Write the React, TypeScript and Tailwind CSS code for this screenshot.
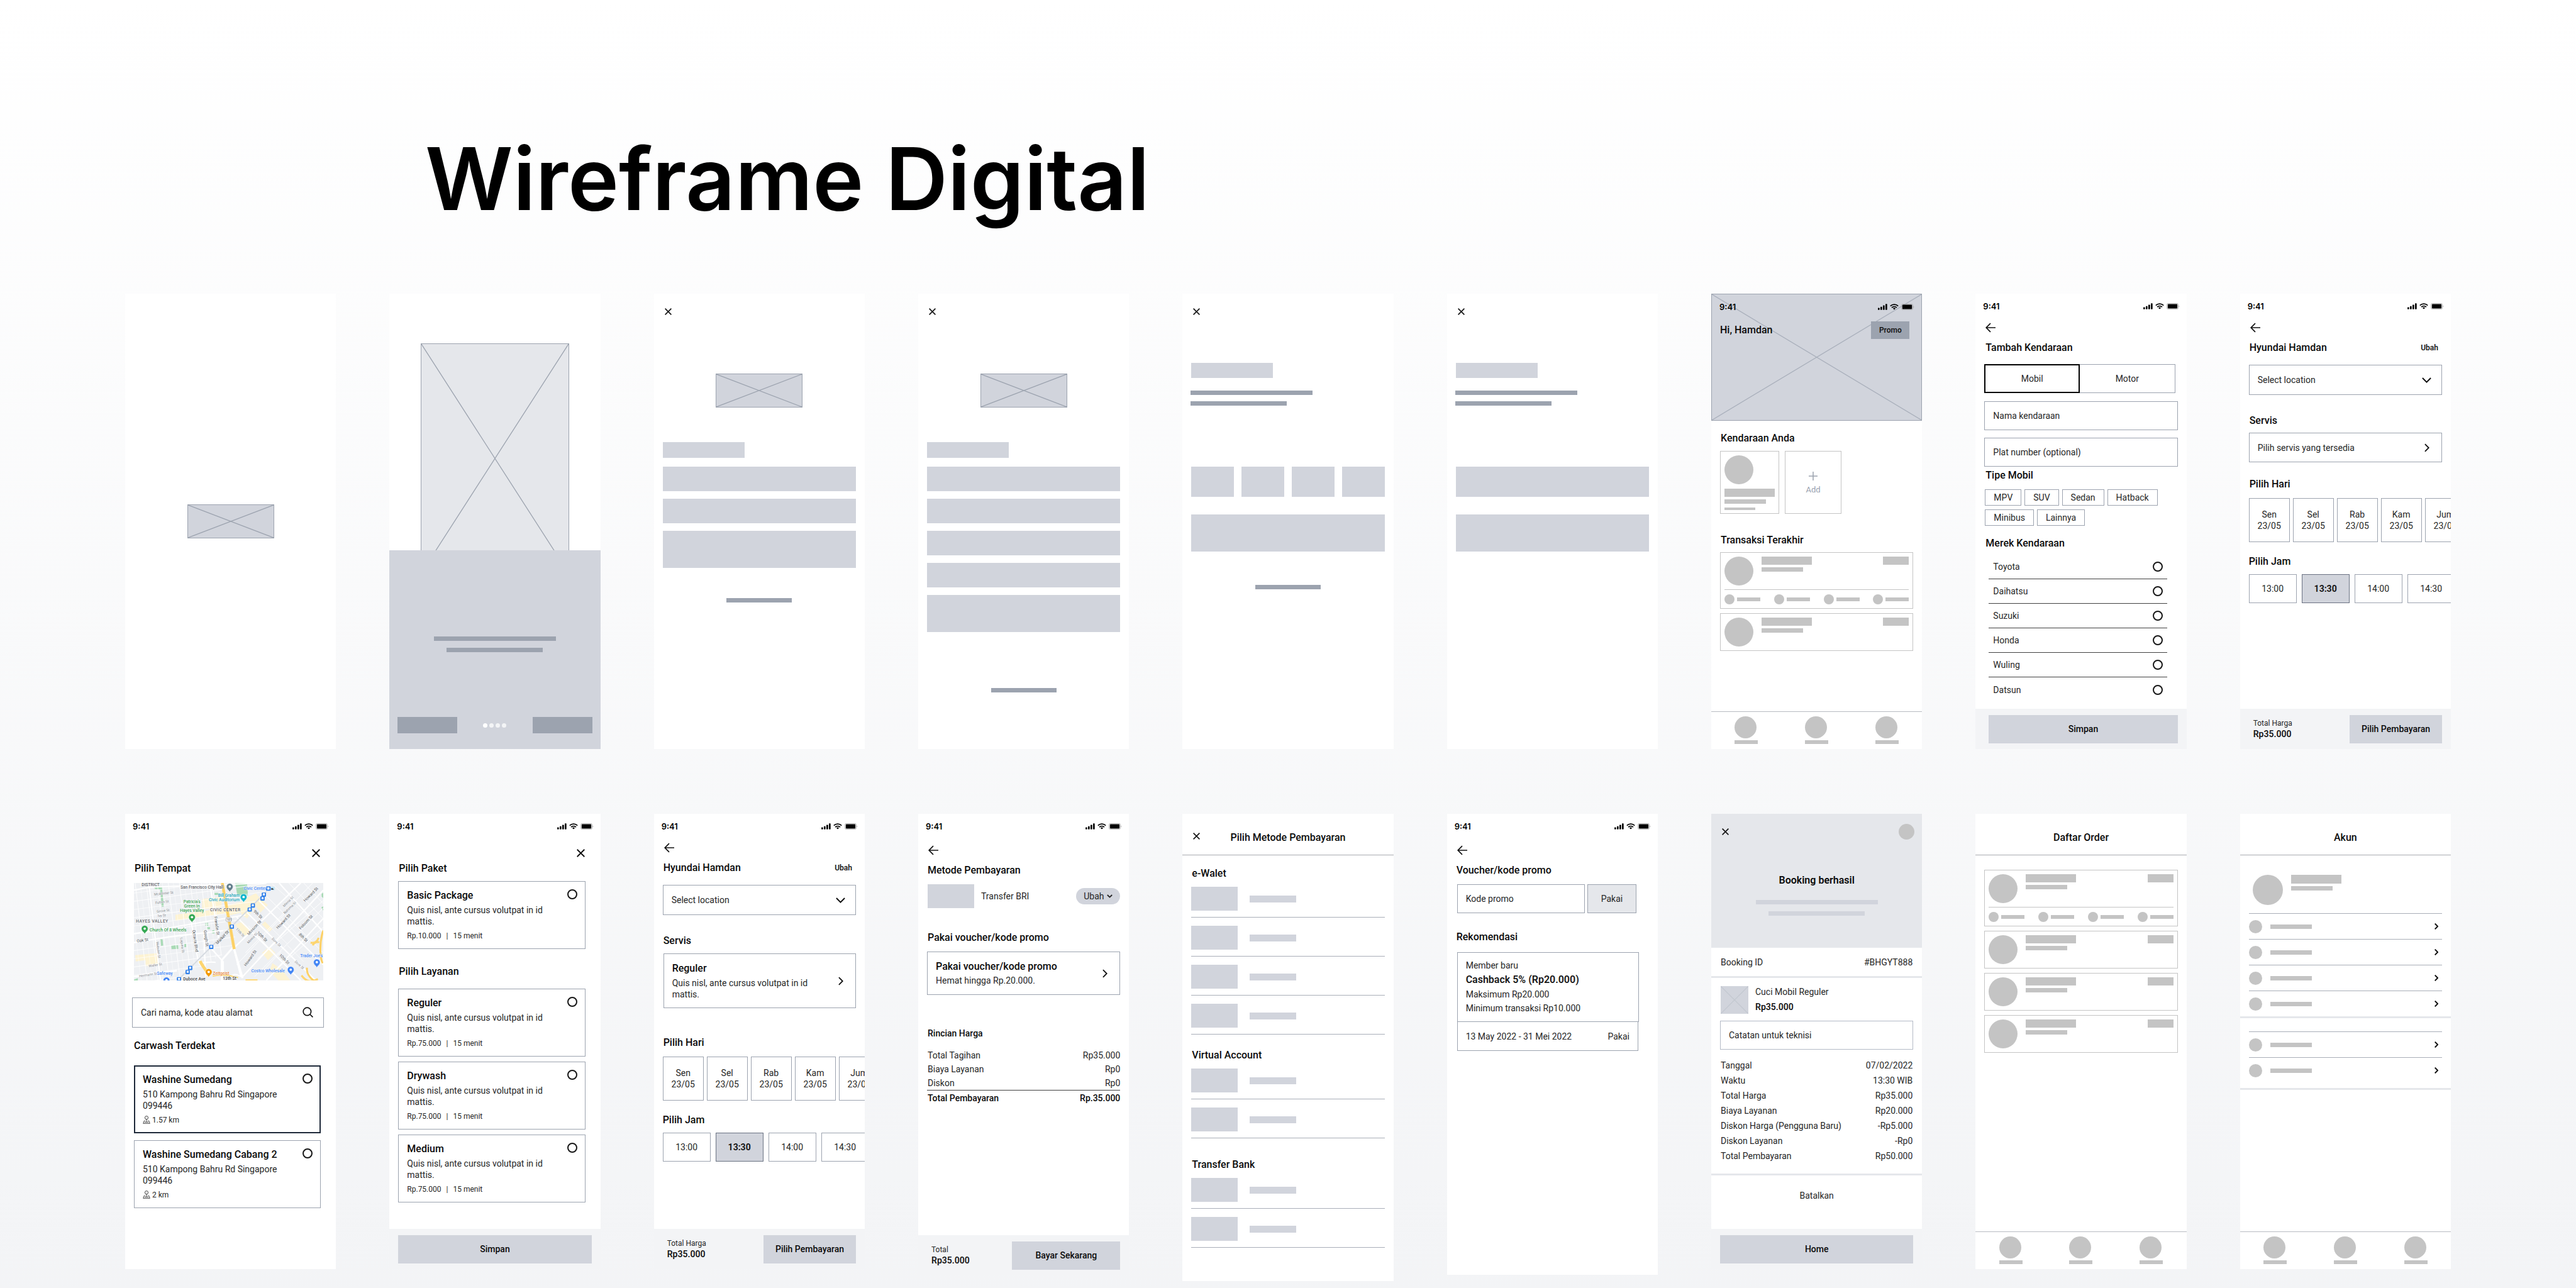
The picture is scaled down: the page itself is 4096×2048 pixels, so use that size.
import { Fragment, useId, type ReactNode } from "react";

/* ---------- icons ---------- */

function CloseIcon() {
  return (
    <svg viewBox="0 0 11 11" className="size-full" fill="none" stroke="#111" strokeWidth="1.6" aria-hidden="true">
      <path d="M.6.6l9.8 9.8M10.4.6L.6 10.4" />
    </svg>
  );
}

function BackIcon() {
  return (
    <svg viewBox="0 0 16 16" className="size-4" fill="none" stroke="#111" strokeWidth="1.7" aria-hidden="true">
      <path d="M16 8H1.6M8 1.2L1.2 8 8 14.8" />
    </svg>
  );
}

function ChevronDown() {
  return (
    <svg viewBox="0 0 15 9" className="h-[9px] w-[15px]" fill="none" stroke="#111" strokeWidth="2" aria-hidden="true">
      <path d="M.9 1l6.6 6.6L14.1 1" />
    </svg>
  );
}

function ChevronRight({ small = false }: { small?: boolean }) {
  return (
    <svg
      viewBox="0 0 9 15"
      className={small ? "h-[10px] w-[6px]" : "h-[14px] w-[8px]"}
      fill="none"
      stroke="#111"
      strokeWidth={small ? 3 : 2}
      aria-hidden="true"
    >
      <path d="M1 .9l6.6 6.6L1 14.1" />
    </svg>
  );
}

function SearchIcon() {
  return (
    <svg viewBox="0 0 17 17" className="size-[17px]" fill="none" stroke="#111" strokeWidth="1.7" aria-hidden="true">
      <circle cx="7.4" cy="7.4" r="6.2" />
      <path d="M12 12l4.4 4.4" />
    </svg>
  );
}

function DistanceIcon() {
  return (
    <svg viewBox="0 0 12 13" className="h-[13px] w-[12px]" fill="none" stroke="#444" strokeWidth="1" aria-hidden="true">
      <circle cx="6" cy="3.2" r="2.6" />
      <path d="M6 5.8v4M3.6 8H2.4L.7 12.3h10.6L9.6 8H8.4M3 10.2h6" />
    </svg>
  );
}

function PlusIcon() {
  return (
    <svg viewBox="0 0 14 14" className="size-[14px]" stroke="#9ca3af" strokeWidth="1.5" aria-hidden="true">
      <path d="M7 0v14M0 7h14" />
    </svg>
  );
}

function SignalIcon() {
  return (
    <svg viewBox="0 0 15 10" className="h-[10px] w-[15px]" aria-hidden="true">
      <rect x="0" y="6.4" width="2.7" height="3.4" rx=".7" />
      <rect x="4" y="4.8" width="2.7" height="5" rx=".7" />
      <rect x="8" y="2.6" width="2.7" height="7.2" rx=".7" />
      <rect x="12" y=".2" width="2.7" height="9.6" rx=".7" />
    </svg>
  );
}

function WifiIcon() {
  return (
    <svg viewBox="0 0 14 10" className="h-[10px] w-[14px]" fill="none" stroke="#000" strokeWidth="1.7" aria-hidden="true">
      <path d="M.8 3.7a9 9 0 0 1 12.4 0M3 6.1a5.9 5.9 0 0 1 8 0" />
      <path d="M7 9.6L4.9 7.6a3 3 0 0 1 4.2 0z" fill="#000" stroke="none" />
    </svg>
  );
}

function BatteryIcon() {
  return (
    <svg viewBox="0 0 21 10" className="h-[10px] w-[21px]" aria-hidden="true">
      <rect x=".4" y=".4" width="18.2" height="9.2" rx="2.4" fill="none" stroke="#a3a3a3" strokeWidth=".8" />
      <rect x="1.8" y="1.6" width="15.4" height="6.8" rx="1.2" />
      <path d="M19.5 3.4a2 2 0 0 1 0 3.2z" fill="#a3a3a3" />
    </svg>
  );
}

/* ---------- shared parts ---------- */

function Phone({ label, className = "min-h-[724px]", children }: { label: string; className?: string; children?: ReactNode }) {
  return (
    <section aria-label={label} className={`flex min-w-0 flex-col overflow-hidden bg-white ${className}`}>
      {children}
    </section>
  );
}

function StatusBar() {
  return (
    <div className="flex h-10 shrink-0 items-center justify-between pr-[11px] pl-3">
      <span className="font-['Inter',sans-serif] text-[13px] leading-[18px] font-semibold text-black">9:41</span>
      <span className="flex items-center gap-1">
        <SignalIcon />
        <WifiIcon />
        <BatteryIcon />
      </span>
    </div>
  );
}

function Back({ className = "mt-[6px]" }: { className?: string }) {
  return (
    <button type="button" aria-label="Kembali" className={`ml-4 size-4 shrink-0 ${className}`}>
      <BackIcon />
    </button>
  );
}

function Close({ className = "mt-[23px] ml-[17px] size-[11px]" }: { className?: string }) {
  return (
    <button type="button" aria-label="Tutup" className={`block shrink-0 ${className}`}>
      <CloseIcon />
    </button>
  );
}

function Heading({ className = "font-medium", children }: { className?: string; children: ReactNode }) {
  return <h2 className={`text-base leading-5 font-medium text-neutral-950 ${className}`}>{children}</h2>;
}

function CrossBox({ className = "", stroke = "#9ca3af" }: { className?: string; stroke?: string }) {
  return (
    <div className={className}>
      <svg viewBox="0 0 100 100" preserveAspectRatio="none" className="block size-full" stroke={stroke} aria-hidden="true">
        <path d="M0 0L100 100M100 0L0 100" vectorEffect="non-scaling-stroke" strokeWidth="1.3" />
      </svg>
    </div>
  );
}

const Light = ({ className }: { className: string }) => <div className={`bg-[#d1d4dc] ${className}`} />;
const Dark = ({ className }: { className: string }) => <div className={`bg-[#9ca3af] ${className}`} />;
const Grey = ({ className }: { className: string }) => <div className={`bg-[#c4c4c4] ${className}`} />;

function Radio({ name, label }: { name: string; label: string }) {
  return (
    <input
      type="radio"
      name={name}
      aria-label={label}
      className="size-4 shrink-0 appearance-none rounded-full border-2 border-neutral-900 checked:bg-neutral-900"
    />
  );
}

function TextField({ label, className }: { label: string; className: string }) {
  return (
    <input
      type="text"
      aria-label={label}
      placeholder={label}
      className={`block min-w-0 border border-[#9ca3af] bg-white px-[13px] text-sm text-neutral-800 placeholder:text-neutral-800 ${className}`}
    />
  );
}

function Footer({ children }: { children: ReactNode }) {
  return <div className="mt-auto flex h-16 shrink-0 items-center justify-between bg-gray-100">{children}</div>;
}

function FooterButton({ className, children }: { className: string; children: ReactNode }) {
  return (
    <button type="button" className={`h-[45px] bg-[#d1d4dc] text-sm font-medium text-neutral-950 ${className}`}>
      {children}
    </button>
  );
}

function PriceFooter({ label, action, wide = false }: { label: string; action: string; wide?: boolean }) {
  return (
    <Footer>
      <div className="ml-[21px]">
        <p className="text-xs leading-4 text-neutral-800">{label}</p>
        <p className="text-sm leading-[18px] font-semibold text-neutral-900">Rp35.000</p>
      </div>
      <FooterButton className={wide ? "mr-[14px] w-[172px]" : "mr-[14px] w-[147px]"}>{action}</FooterButton>
    </Footer>
  );
}

function BottomNav() {
  return (
    <nav aria-label="Navigasi" className="mt-auto grid h-[60px] shrink-0 grid-cols-3 border-t border-[#b8bbc2] pt-[7px]">
      {["Beranda", "Order", "Akun"].map((n) => (
        <a key={n} href="#" aria-label={n} className="mx-auto flex w-[37px] flex-col gap-[3px]">
          <Grey className="size-[35px] rounded-full" />
          <Grey className="h-[6px]" />
        </a>
      ))}
    </nav>
  );
}

function OrderCard({ steps = false }: { steps?: boolean }) {
  return (
    <article className="mx-[14px] flex flex-col border border-[#c4c4c4] p-[6px]">
      <div className="flex items-start">
        <Grey className="size-[46px] rounded-full" />
        <div className="ml-[13px] flex flex-1 flex-col gap-[4px]">
          <Grey className="h-[13px] w-[80px]" />
          <Grey className="h-[7px] w-[66px]" />
        </div>
        <Grey className="h-[13px] w-[41px]" />
      </div>
      {steps && (
        <div className="mt-[6px] flex justify-between border-t border-[#c4c4c4] pt-[7px]">
          {[0, 1, 2, 3].map((i) => (
            <div key={i} className="flex items-center gap-1">
              <Grey className="size-4 rounded-full" />
              <Grey className="h-[6px] w-[37px]" />
            </div>
          ))}
        </div>
      )}
    </article>
  );
}

function VehicleHeader() {
  return (
    <>
      <StatusBar />
      <Back />
      <div className="mt-[14px] mr-[20px] ml-[15px] flex items-center justify-between">
        <Heading>Hyundai Hamdan</Heading>
        <button type="button" className="text-xs leading-5 font-semibold text-neutral-900">
          Ubah
        </button>
      </div>
      <div className="mx-[14px] mt-[17px] grid h-[48px] shrink-0 items-center border border-[#9ca3af]">
        <select
          aria-label="Lokasi"
          className="h-full w-full appearance-none bg-transparent px-[13px] text-sm text-neutral-800 [grid-area:1/1]"
        >
          <option>Select location</option>
        </select>
        <span className="pointer-events-none mr-[16px] justify-self-end [grid-area:1/1]">
          <ChevronDown />
        </span>
      </div>
      <Heading className="mt-[31px] ml-[15px]">Servis</Heading>
    </>
  );
}

function Schedule() {
  return (
    <>
      <div className="mt-[12px] ml-[14px] flex gap-[5px] overflow-hidden">
        {["Sen", "Sel", "Rab", "Kam", "Jum"].map((d) => (
          <button
            key={d}
            type="button"
            className="h-[70px] w-[65px] shrink-0 border border-[#9ca3af] text-sm leading-[18px] text-neutral-800"
          >
            {d}
            <br />
            23/05
          </button>
        ))}
      </div>
      <Heading className="mt-[21px] ml-[14px]">Pilih Jam</Heading>
      <div className="mt-[10px] ml-[14px] flex gap-2 overflow-hidden">
        {["13:00", "13:30", "14:00", "14:30"].map((t) => (
          <button
            key={t}
            type="button"
            aria-pressed={t === "13:30"}
            className="h-[46px] w-[76px] shrink-0 border border-[#9ca3af] text-sm text-neutral-800 aria-pressed:border-gray-500 aria-pressed:bg-[#d1d4dc] aria-pressed:font-bold aria-pressed:text-neutral-900"
          >
            {t}
          </button>
        ))}
      </div>
      <PriceFooter label="Total Harga" action="Pilih Pembayaran" />
    </>
  );
}

function OptionCard({
  title,
  lines,
  meta,
  name,
  selected = false,
}: {
  title: string;
  lines: string;
  meta: ReactNode;
  name: string;
  selected?: boolean;
}) {
  return (
    <label
      className={
        selected
          ? "mr-[24px] ml-[14px] flex items-start justify-between border-2 border-gray-800 p-[11px]"
          : "mr-[24px] ml-[14px] flex items-start justify-between border border-[#9ca3af] p-[12px]"
      }
    >
      <span className="flex max-w-[240px] flex-col pl-[1px]">
        <span className="text-base leading-5 font-medium text-neutral-950">{title}</span>
        <span className="mt-[4px] text-sm leading-[18px] text-neutral-800">{lines}</span>
        <span className="mt-[6px] flex items-center text-xs leading-4 text-neutral-800">{meta}</span>
      </span>
      <Radio name={name} label={title} />
    </label>
  );
}

/* ---------- map ---------- */

const STATIONS: [number, number][] = [
  [883, 90],
  [874, 116],
  [809, 163],
  [788, 190],
  [668, 305],
  [530, 441],
  [389, 582],
  [372, 609],
  [314, 657],
];

const PINS: [number, number, string][] = [
  [654, 40, "#607d8b"],
  [747, 110, "#12b5cb"],
  [401, 245, "#34a853"],
  [84, 322, "#34a853"],
  [513, 612, "#f29900"],
  [1063, 597, "#4285f4"],
  [1238, 547, "#4285f4"],
  [230, 668, "#4285f4"],
];

const STREETS: [string, number, number, number, boolean][] = [
  ["McAllister St", 148, 96, -6, false],
  ["Fulton St", 156, 153, -7, false],
  ["Grove St", 166, 211, -7, false],
  ["Ivy St", 172, 240, -4, false],
  ["Oak St", 32, 411, -8, true],
  ["Waller St", 112, 577, -9, false],
  ["Hermann St", 48, 645, -9, false],
  ["Webster St", 160, 407, 82, false],
  ["Laguna St", 322, 380, 83, false],
  ["Octavia Blvd", 404, 328, 82, true],
  ["Gough St", 480, 330, 82, true],
  ["Franklin St", 550, 238, 82, true],
  ["Market St", 572, 425, -47, true],
  ["Mission St", 782, 364, -47, true],
  ["Minna St", 780, 420, -47, false],
  ["Howard St", 764, 572, -55, true],
  ["Howard St", 978, 322, -47, true],
  ["Howard St", 1160, 140, -45, true],
  ["Minna St", 1020, 174, -45, false],
  ["Natoma St", 1024, 222, -45, false],
  ["Folsom St", 1130, 326, -47, true],
  ["9th St", 812, 204, 44, true],
  ["10th St", 834, 348, 44, true],
  ["11th St", 694, 322, 48, false],
  ["Dore St", 934, 388, 44, false],
  ["8th St", 1116, 360, 44, true],
  ["10th St", 984, 498, 46, true],
  ["Dore St", 1088, 542, 42, false],
];

function CityMap() {
  const clip = useId();
  const left = [0, 1, 2, 3, 4, 5, 6, 7];
  return (
    <svg viewBox="12 12 1269 653" className="mt-[13px] ml-[14px] block w-[301px]" role="img" aria-label="Peta Civic Center">
      <defs>
        <clipPath id={clip}>
          <path d="M12 12H940L680 300 700 440 300 665H12z" />
        </clipPath>
      </defs>
      <rect x="12" y="12" width="1269" height="653" fill="#eef0f3" />
      <g fill="#fdf3d3">
        <path d="M290 225l360-48v36l-360 52zM470 120l130-16v70l-130 14zM640 160l130-30v70l-120 30zM770 110l60-30 30 40-90 130-40-30zM690 290l50-20 60 80-50 15zM20 496l150-14v80l-80 8v-40l-66 8zM850 110l60 50-50 50-30-40zM890 270l50 50-20 20-50-50zM870 480l50-40 40 40-50 50zM940 550l60 40 60 74h-80l-60-60z" />
      </g>
      <g fill="#a8dab5">
        <path d="M690 12h80l6 82-70 6zM150 40h50l12 130-14 2-10-116-36-4zM262 430l46-2 2 26-46 2zM190 388l14 2 4 42-14 2zM490 280h20v18h-20zM502 308h20v14h-20zM535 328h17v22h-17zM350 418h12v24h-12zM552 78h26v14h-26zM1270 85l11-8v36l-11-10zM1268 175l13-6v28zM12 660l26-10v15H12z" />
      </g>
      <g stroke="#fff" fill="none">
        <g clipPath={`url(#${clip})`} strokeWidth="4">
          {left.map((i) => (
            <path key={`v${i}`} d={`M${20 + i * 74} 12L${100 + i * 74} 665`} />
          ))}
          {left.map((i) => (
            <path key={`w${i}`} d={`M${-20 + i * 74} 12L${60 + i * 74} 665`} strokeWidth="2" />
          ))}
          {[0, 1, 2, 3, 4, 5, 6, 7, 8, 9, 10, 11, 12].map((i) => (
            <path key={`h${i}`} d={`M12 ${80 + i * 55}L900 ${-40 + i * 55}`} strokeWidth={i % 2 ? 4 : 3} />
          ))}
        </g>
        <path d="M112 12L150 345 190 665M12 352L760 226M12 412L250 372 610 332M395 270L440 520 452 560M480 330L492 640M12 60L120 40 900 12M520 12L580 390M610 665V540L520 440" strokeWidth="9" />
        <path d="M680 440L600 530V665M680 440L730 640M12 640L300 600" strokeWidth="12" />
        <path d="M610 12L682 450 740 650" strokeWidth="14" />
        <path d="M690 440L1130 12M740 640L1281 60M900 665L1281 250M700 240L1130 665M770 210L1230 665M850 130L1281 560M985 12L1281 340" strokeWidth="9" />
        <path d="M760 480L1210 12M840 520L1281 130M960 600L1281 310M880 80L1281 480M780 300L1000 540M860 620L1000 470M1050 12L1281 250M1150 12L1281 150M700 560L1060 180M820 640L1281 180" strokeWidth="4" />
        <path d="M940 20L1040 110M1060 130L1180 240M1000 240L1100 350M940 320L1040 420M1040 430L1150 540M870 400L960 490" strokeWidth="3" />
        <path d="M560 545c-30-8-60 0-110 4M640 665c40-60 60-40 100-20" strokeWidth="8" />
      </g>
      <path d="M900 70L320 650" stroke="#dfe3e8" strokeWidth="9" fill="none" />
      <path d="M900 70L320 650" stroke="#b9c0c8" strokeWidth="2" fill="none" />
      <g stroke="#fdd56f" fill="none">
        <path d="M604 12L684 455" strokeWidth="20" />
        <path d="M456 535c6 20 20 34 40 66" strokeWidth="20" />
        <path d="M540 636c80-14 120 0 170 10" strokeWidth="8" />
        <path d="M760 662h80" strokeWidth="8" />
        <path d="M1281 330c-26 80-24 180-4 220M1196 412c30 6 46-10 54-32M1210 430c10-20 30-26 44-20M1172 580c-6 50 40 90 60 90M1135 632c30 40 60 50 110 24" strokeWidth="13" />
      </g>
      <g stroke="#f9bd46" fill="none" strokeWidth="2">
        <path d="M604 12L684 455M1274 340c-20 70-18 170 2 210M1172 580c-6 50 40 90 60 90" />
      </g>
      <g fill="#fff" stroke="#9aa0a6" strokeWidth="3">
        <rect x="629" y="243" width="36" height="28" rx="6" />
      </g>
      <text x="633" y="265" fontSize="20" fontWeight="500" fill="#5f6368">
        101
      </text>
      {STATIONS.map(([x, y]) => (
        <g key={`${x}-${y}`}>
          <rect x={x - 14} y={y - 14} width="28" height="28" rx="5" fill="#1a73e8" />
          <path d={`M${x - 6} ${y - 8}h12v12h-12zM${x - 4} ${y + 6}l-3 4M${x + 4} ${y + 6}l3 4`} fill="#fff" stroke="#fff" strokeWidth="2" />
        </g>
      ))}
      <rect x="898" y="35" width="30" height="29" rx="5" fill="#1a73e8" />
      <path d="M906 42h14v13h-14zM909 57l-3 4M917 57l3 4" fill="#fff" stroke="#fff" strokeWidth="2" />
      <path d="M931 38h24v22h-24z" fill="#bfe6f8" />
      <path d="M932 48h10l8 8h-18z" fill="#202124" />
      {PINS.map(([x, y, c]) => (
        <g key={`${x}-${y}`}>
          <path
            d={`M${x} ${y + 34}c-2-14-22-20-22-37a22 22 0 0 1 44 0c0 17-20 23-22 37z`}
            fill={c}
            stroke="#fff"
            strokeWidth="2"
          />
          <circle cx={x} cy={y - 4} r="8" fill="#fff" />
        </g>
      ))}
      <g fill="#5f6368" fontSize="28" fontWeight="500" stroke="#fff" strokeWidth="3" paintOrder="stroke">
        <text x="64" y="34">DISTRICT</text>
        <text x="26" y="278" letterSpacing="2">HAYES VALLEY</text>
        <text x="522" y="200" letterSpacing="2">CIVIC CENTER</text>
        <text x="342" y="664" fill="#3c4043">Duboce Ave</text>
        <text x="608" y="661" fill="#3c4043">13th St</text>
        <text x="324" y="51">San Francisco City Hall</text>
        <g fill="#1aa3b8">
          <text x="720" y="106" textAnchor="end">Bill Graham</text>
          <text x="720" y="136" textAnchor="end">Civic Auditorium</text>
        </g>
        <g fill="#34a04e" textAnchor="middle">
          <text x="401" y="148">Patricia's</text>
          <text x="401" y="178">Green In</text>
          <text x="401" y="208">Hayes Valley</text>
          <text x="240" y="335">Church Of 8 Wheels</text>
        </g>
        <g fill="#4285f4">
          <text x="748" y="60">Civic Center</text>
          <text x="166" y="629">Safeway</text>
          <text x="798" y="609">Costco Wholesale</text>
          <text x="1126" y="508">Trader Joe's</text>
        </g>
        <text x="541" y="627" fill="#e8863a">Zeitgeist</text>
      </g>
      <g stroke="#fff" strokeWidth="2" paintOrder="stroke">
        {STREETS.map(([t, x, y, r, major], i) => (
          <text
            key={i}
            x={x}
            y={y}
            transform={`rotate(${r} ${x} ${y})`}
            fontSize={major ? 27 : 23}
            fill={major ? "#4b4f54" : "#7f858b"}
          >
            {t}
          </text>
        ))}
      </g>
    </svg>
  );
}

/* ---------- first row of screens ---------- */

function Splash() {
  return (
    <Phone label="Splash" className="min-h-[724px] items-center justify-center">
      <CrossBox className="h-[54px] w-[138px] border border-[#9ca3af] bg-[#d1d4dc]" />
    </Phone>
  );
}

function Onboarding() {
  return (
    <Phone label="Onboarding">
      <div className="h-[408px] shrink-0 overflow-hidden pt-[79px]">
        <CrossBox className="mx-auto h-[366px] w-[236px] border border-[#9ca3af] bg-gray-200" />
      </div>
      <div className="flex flex-1 flex-col items-center bg-[#d1d4dc] pt-[137px] pb-[25px]">
        <Dark className="h-[7px] w-[194px]" />
        <Dark className="mt-[11px] h-[7px] w-[153px]" />
        <div className="mt-auto flex items-center justify-between self-stretch px-[13px]">
          <button type="button" aria-label="Lewati" className="h-[26px] w-[95px] bg-[#9ca3af]" />
          <div className="flex gap-[3px]">
            <span className="size-[7px] rounded-full bg-white" />
            <span className="size-[7px] rounded-full bg-gray-100" />
            <span className="size-[7px] rounded-full bg-gray-100" />
            <span className="size-[7px] rounded-full bg-gray-100" />
          </div>
          <button type="button" aria-label="Lanjut" className="h-[26px] w-[95px] bg-[#9ca3af]" />
        </div>
      </div>
    </Phone>
  );
}

function FormSketch({ label, fields, link }: { label: string; fields: number; link: string }) {
  return (
    <Phone label={label}>
      <Close />
      <CrossBox className="mt-[93px] h-[54px] w-[138px] shrink-0 self-center border border-[#9ca3af] bg-[#d1d4dc]" />
      <Light className="mt-[55px] ml-[14px] h-[25px] w-[130px]" />
      <div className="mx-[14px] mt-[14px] flex flex-col gap-3">
        {Array.from({ length: fields }, (_, i) => (
          <Light key={i} className="h-[39px]" />
        ))}
        <Light className="h-[59px]" />
      </div>
      <Dark className={`h-[7px] w-[104px] self-center ${link}`} />
    </Phone>
  );
}

function CodeSketch({ label, boxes }: { label: string; boxes: boolean }) {
  return (
    <Phone label={label}>
      <Close />
      <Light className="mt-[76px] ml-[14px] h-[24px] w-[130px]" />
      <Dark className="mt-[20px] ml-[13px] h-[7px] w-[194px]" />
      <Dark className="mt-[10px] ml-[13px] h-[7px] w-[153px]" />
      <div className="mx-[14px] mt-[97px] flex gap-3">
        {(boxes ? [0, 1, 2, 3] : [0]).map((i) => (
          <Light key={i} className="h-[48px] flex-1" />
        ))}
      </div>
      <Light className="mx-[14px] mt-[28px] h-[59px]" />
      {boxes && <Dark className="mt-[53px] h-[7px] w-[104px] self-center" />}
    </Phone>
  );
}

function Home() {
  return (
    <Phone label="Beranda">
      <div className="grid h-[202px] shrink-0 border border-[#9ca3af] bg-[#d1d4dc]">
        <CrossBox className="min-h-0 [grid-area:1/1]" stroke="#a9afbb" />
        <div className="[grid-area:1/1]">
          <StatusBar />
          <div className="mt-[3px] mr-[19px] ml-[13px] flex items-center justify-between">
            <Heading>Hi, Hamdan</Heading>
            <button type="button" className="h-[28px] w-[61px] bg-[#9ca3af] text-xs font-semibold text-neutral-900">
              Promo
            </button>
          </div>
        </div>
      </div>
      <Heading className="mt-[18px] ml-[15px]">Kendaraan Anda</Heading>
      <div className="mt-[10px] ml-[14px] flex gap-[9px]">
        <div className="h-[100px] w-[94px] border border-[#c4c4c4] p-[6px]">
          <Grey className="size-[46px] rounded-full" />
          <Grey className="mt-[7px] h-[13px]" />
          <Grey className="mt-[4px] h-[7px] w-[66px]" />
          <Grey className="mt-[6px] h-[4px] w-[49px]" />
        </div>
        <button
          type="button"
          className="flex h-[100px] w-[90px] flex-col items-center justify-center gap-[6px] border border-[#c4c4c4] pt-1 text-[13px] leading-[18px] text-gray-400"
        >
          <PlusIcon />
          Add
        </button>
      </div>
      <Heading className="mt-[32px] ml-[15px]">Transaksi Terakhir</Heading>
      <div className="mt-[9px] flex flex-col gap-[7px]">
        <OrderCard steps />
        <OrderCard />
      </div>
      <BottomNav />
    </Phone>
  );
}

function AddVehicle() {
  return (
    <Phone label="Tambah Kendaraan">
      <StatusBar />
      <Back />
      <Heading className="mt-[14px] ml-[16px]">Tambah Kendaraan</Heading>
      <div className="mt-[16px] mr-[18px] ml-[14px] grid h-[46px] shrink-0 grid-cols-2 text-sm text-neutral-800">
        <button type="button" className="border-2 border-black">
          Mobil
        </button>
        <button type="button" className="border border-l-0 border-[#9ca3af]">
          Motor
        </button>
      </div>
      <TextField label="Nama kendaraan" className="mx-[14px] mt-[13px] h-[46px] shrink-0" />
      <TextField label="Plat number (optional)" className="mx-[14px] mt-[12px] h-[46px] shrink-0" />
      <Heading className="mt-[4px] ml-[16px]">Tipe Mobil</Heading>
      <div className="mt-[12px] mr-[30px] ml-[15px] flex flex-wrap gap-x-[5px] gap-y-[6px]">
        {["MPV", "SUV", "Sedan", "Hatback", "Minibus", "Lainnya"].map((t) => (
          <button key={t} type="button" className="h-[26px] border border-[#9ca3af] px-[13px] text-sm text-neutral-800">
            {t}
          </button>
        ))}
      </div>
      <Heading className="mt-[18px] ml-[16px]">Merek Kendaraan</Heading>
      <div className="mt-[8px] mr-[31px] ml-[21px]">
        {["Toyota", "Daihatsu", "Suzuki", "Honda", "Wuling", "Datsun"].map((b) => (
          <label
            key={b}
            className="flex h-[39px] items-center justify-between border-b border-neutral-700 px-[7px] text-sm text-neutral-800 last:border-b-0"
          >
            {b}
            <Radio name="brand" label={b} />
          </label>
        ))}
      </div>
      <Footer>
        <FooterButton className="mr-[14px] ml-[21px] flex-1">Simpan</FooterButton>
      </Footer>
    </Phone>
  );
}

function BookEmpty() {
  return (
    <Phone label="Pesan servis">
      <VehicleHeader />
      <button
        type="button"
        className="mx-[14px] mt-[9px] flex h-[47px] shrink-0 items-center justify-between border border-[#9ca3af] pr-[19px] pl-[13px] text-sm text-neutral-800"
      >
        Pilih servis yang tersedia
        <ChevronRight />
      </button>
      <Heading className="mt-[25px] ml-[15px]">Pilih Hari</Heading>
      <Schedule />
    </Phone>
  );
}

/* ---------- second row of screens ---------- */

function PickPlace() {
  return (
    <Phone label="Pilih Tempat">
      <StatusBar />
      <Close className="mt-[16px] mr-[25px] size-[13px] self-end" />
      <Heading className="mt-[8px] ml-[15px]">Pilih Tempat</Heading>
      <CityMap />
      <div className="mr-[19px] ml-[11px] mt-[27px] flex h-[48px] shrink-0 items-center border border-[#9ca3af] pr-[16px]">
        <input
          type="search"
          aria-label="Cari tempat cuci"
          placeholder="Cari nama, kode atau alamat"
          className="h-full min-w-0 flex-1 appearance-none bg-transparent pl-[13px] text-sm text-neutral-800 placeholder:text-neutral-800"
        />
        <SearchIcon />
      </div>
      <Heading className="mt-[19px] ml-[14px]">Carwash Terdekat</Heading>
      <div className="mt-[21px] flex flex-col gap-[11px]">
        <OptionCard
          name="place"
          selected
          title="Washine Sumedang"
          lines="510 Kampong Bahru Rd Singapore 099446"
          meta={
            <span className="flex items-center gap-[3px]">
              <DistanceIcon />
              1.57 km
            </span>
          }
        />
        <OptionCard
          name="place"
          title="Washine Sumedang Cabang 2"
          lines="510 Kampong Bahru Rd Singapore 099446"
          meta={
            <span className="flex items-center gap-[3px]">
              <DistanceIcon />2 km
            </span>
          }
        />
      </div>
    </Phone>
  );
}

const QUIS = "Quis nisl, ante cursus volutpat in id mattis.";

function Meta({ price }: { price: string }) {
  return (
    <>
      <span>{price}</span>
      <span className="mx-2">|</span>
      <span>15 menit</span>
    </>
  );
}

function PickPackage() {
  return (
    <Phone label="Pilih Paket">
      <StatusBar />
      <Close className="mt-[16px] mr-[25px] size-[13px] self-end" />
      <Heading className="mt-[8px] ml-[15px]">Pilih Paket</Heading>
      <div className="mt-[10px] flex flex-col">
        <OptionCard name="package" title="Basic Package" lines={QUIS} meta={<Meta price="Rp.10.000" />} />
      </div>
      <Heading className="mt-[26px] ml-[15px]">Pilih Layanan</Heading>
      <div className="mt-[17px] flex flex-col gap-[8px]">
        {["Reguler", "Drywash", "Medium"].map((t) => (
          <OptionCard key={t} name="service" title={t} lines={QUIS} meta={<Meta price="Rp.75.000" />} />
        ))}
      </div>
      <Footer>
        <FooterButton className="mx-[14px] flex-1">Simpan</FooterButton>
      </Footer>
    </Phone>
  );
}

function BookFilled() {
  return (
    <Phone label="Pesan servis reguler">
      <VehicleHeader />
      <button
        type="button"
        className="mr-[14px] ml-[15px] mt-[10px] flex h-[87px] shrink-0 items-center justify-between border border-[#9ca3af] pr-[19px] pl-[13px] text-left"
      >
        <span className="flex max-w-[240px] flex-col">
          <span className="text-base leading-5 font-medium text-neutral-950">Reguler</span>
          <span className="mt-[4px] text-sm leading-[18px] text-neutral-800">{QUIS}</span>
        </span>
        <ChevronRight />
      </button>
      <Heading className="mt-[45px] ml-[15px]">Pilih Hari</Heading>
      <Schedule />
    </Phone>
  );
}

function Payment() {
  return (
    <Phone label="Metode Pembayaran" className="min-h-[734px]">
      <StatusBar />
      <Back className="mt-[10px]" />
      <Heading className="mt-[14px] ml-[15px]">Metode Pembayaran</Heading>
      <div className="mr-[14px] ml-[15px] mt-[12px] flex items-center">
        <Light className="h-[38px] w-[74px]" />
        <span className="ml-[11px] flex-1 text-sm text-neutral-800">Transfer BRI</span>
        <button
          type="button"
          className="flex h-[26px] w-[70px] items-center justify-center gap-[5px] rounded-full bg-[#d1d4dc] text-sm text-neutral-800"
        >
          Ubah
          <svg viewBox="0 0 9 6" className="h-[6px] w-[9px]" fill="none" stroke="#222" strokeWidth="1.8" aria-hidden="true">
            <path d="M.8 1l3.7 3.6L8.2 1" />
          </svg>
        </button>
      </div>
      <Heading className="mt-[37px] ml-[15px]">Pakai voucher/kode promo</Heading>
      <button
        type="button"
        className="mx-[14px] mt-[12px] flex h-[69px] shrink-0 items-center justify-between border border-[#9ca3af] pr-[19px] pl-[13px] text-left"
      >
        <span className="flex flex-col">
          <span className="text-base leading-5 font-medium text-neutral-950">Pakai voucher/kode promo</span>
          <span className="mt-[3px] text-sm leading-[18px] text-neutral-800">Hemat hingga Rp.20.000.</span>
        </span>
        <ChevronRight />
      </button>
      <table className="mx-[14px] mt-[52px] text-sm text-neutral-800">
        <caption className="pb-[15px] pl-[1px] text-left leading-[18px] font-medium text-neutral-950">Rincian Harga</caption>
        <tbody>
          {[
            ["Total Tagihan", "Rp35.000"],
            ["Biaya Layanan", "Rp0"],
            ["Diskon", "Rp0"],
          ].map(([k, v]) => (
            <tr key={k} className="h-[22px]">
              <td className="pl-[1px]">{k}</td>
              <td className="text-right">{v}</td>
            </tr>
          ))}
        </tbody>
        <tfoot>
          <tr className="h-[25px] border-t border-neutral-700 font-medium text-neutral-950">
            <td className="pl-[1px]">Total Pembayaran</td>
            <td className="text-right">Rp.35.000</td>
          </tr>
        </tfoot>
      </table>
      <PriceFooter label="Total" action="Bayar Sekarang" wide />
    </Phone>
  );
}

function TitleBar({ children }: { children: ReactNode }) {
  return <div className="flex h-[66px] shrink-0 items-center border-b border-[#a8abb0] pt-[10px]">{children}</div>;
}

function MethodGroup({ title, rows, className }: { title: string; rows: number; className: string }) {
  return (
    <>
      <Heading className={`ml-[15px] ${className}`}>{title}</Heading>
      <ul className="mx-[14px] mt-[11px] flex flex-col gap-[13px]">
        {Array.from({ length: rows }, (_, i) => (
          <li key={i} className="flex items-center border-b border-[#a9aeb8] pb-[10px]">
            <Light className="h-[38px] w-[74px]" />
            <Light className="ml-[19px] h-[11px] w-[74px]" />
          </li>
        ))}
      </ul>
    </>
  );
}

function PaymentMethods() {
  return (
    <Phone label="Pilih Metode Pembayaran" className="min-h-[743px]">
      <TitleBar>
        <Close className="-mt-[4px] ml-[17px] size-[11px]" />
        <Heading className="mr-[28px] flex-1 text-center">Pilih Metode Pembayaran</Heading>
      </TitleBar>
      <MethodGroup title="e-Walet" rows={4} className="mt-[19px]" />
      <MethodGroup title="Virtual Account" rows={2} className="mt-[23px]" />
      <MethodGroup title="Transfer Bank" rows={2} className="mt-[32px]" />
    </Phone>
  );
}

function Voucher() {
  return (
    <Phone label="Voucher" className="min-h-[733px]">
      <StatusBar />
      <Back className="mt-[10px]" />
      <Heading className="mt-[14px] ml-[15px]">Voucher/kode promo</Heading>
      <div className="mr-[34px] ml-[16px] mt-[12px] flex gap-1">
        <TextField label="Kode promo" className="h-[46px] flex-1" />
        <button type="button" className="h-[46px] w-[78px] border border-[#9ca3af] bg-gray-200 text-sm text-neutral-800">
          Pakai
        </button>
      </div>
      <Heading className="mt-[28px] ml-[15px]">Rekomendasi</Heading>
      <div className="mr-[30px] ml-[16px] mt-[14px] flex flex-col gap-1 border border-[#9ca3af] px-[13px] pt-[11px] pb-[12px] text-sm leading-[18px] text-neutral-800">
        <p>Member baru</p>
        <p className="text-base leading-5 font-semibold text-neutral-900">Cashback 5% (Rp20.000)</p>
        <p>Maksimum Rp20.000</p>
        <p>Minimum transaksi Rp10.000</p>
      </div>
      <div className="mr-[31px] ml-[16px] flex h-[46px] items-center justify-between border border-t-0 border-[#9ca3af] px-[13px] text-sm text-neutral-800">
        <span>13 May 2022 - 31 Mei 2022</span>
        <button type="button">Pakai</button>
      </div>
    </Phone>
  );
}

const DETAILS = [
  ["Tanggal", "07/02/2022"],
  ["Waktu", "13:30 WIB"],
  ["Total Harga", "Rp35.000"],
  ["Biaya Layanan", "Rp20.000"],
  ["Diskon Harga (Pengguna Baru)", "-Rp5.000"],
  ["Diskon Layanan", "-Rp0"],
  ["Total Pembayaran", "Rp50.000"],
];

function Success() {
  return (
    <Phone label="Booking berhasil">
      <header className="flex h-[213px] shrink-0 flex-col items-center bg-gray-200 pt-[16px]">
        <div className="flex items-center justify-between self-stretch pr-[12px] pl-[17px]">
          <Close className="size-[11px]" />
          <Grey className="size-[25px] rounded-full" />
        </div>
        <h2 className="mt-[55px] text-base leading-5 font-semibold text-neutral-950">Booking berhasil</h2>
        <Light className="mt-[21px] h-[7px] w-[194px]" />
        <Light className="mt-[11px] h-[7px] w-[153px]" />
      </header>
      <div className="flex h-[48px] shrink-0 items-center justify-between border-b-3 border-gray-200 px-[15px] text-sm text-neutral-800">
        <span>Booking ID</span>
        <span>#BHGYT888</span>
      </div>
      <div className="mt-[13px] ml-[15px] flex gap-[11px]">
        <CrossBox className="size-[44px] bg-[#d1d4dc]" stroke="#c3c8d0" />
        <div className="text-sm leading-[18px]">
          <p className="text-neutral-800">Cuci Mobil Reguler</p>
          <p className="mt-[6px] font-semibold text-neutral-900">Rp35.000</p>
        </div>
      </div>
      <input
        type="text"
        aria-label="Catatan untuk teknisi"
        placeholder="Catatan untuk teknisi"
        className="mx-[14px] mt-[11px] block h-[46px] shrink-0 border border-[#b4bac6] px-[13px] text-sm text-neutral-800 placeholder:text-neutral-800"
      />
      <table className="mx-[15px] mt-[13px] text-sm text-neutral-800">
        <tbody>
          {DETAILS.map(([k, v]) => (
            <tr key={k} className="h-6">
              <td>{k}</td>
              <td className="text-right">{v}</td>
            </tr>
          ))}
        </tbody>
      </table>
      <div className="mt-[16px] border-t-3 border-gray-200 pt-[20px] text-center">
        <button type="button" className="text-sm text-neutral-800">
          Batalkan
        </button>
      </div>
      <Footer>
        <FooterButton className="mx-[14px] flex-1">Home</FooterButton>
      </Footer>
    </Phone>
  );
}

function Orders() {
  return (
    <Phone label="Daftar Order">
      <TitleBar>
        <Heading className="flex-1 text-center">Daftar Order</Heading>
      </TitleBar>
      <div className="mt-[23px] flex flex-col gap-[7px]">
        <OrderCard steps />
        <OrderCard />
        <OrderCard />
        <OrderCard />
      </div>
      <BottomNav />
    </Phone>
  );
}

function AccountRows({ count, className }: { count: number; className: string }) {
  return (
    <ul className={`mx-[14px] ${className}`}>
      {Array.from({ length: count }, (_, i) => (
        <li key={i} className="border-t border-[#a9aeb8]">
          <a href="#" aria-label={`Menu ${i + 1}`} className="flex h-10 items-center pr-[6px]">
            <Grey className="size-[21px] rounded-full" />
            <Grey className="ml-[13px] h-[7px] w-[66px]" />
            <span className="ml-auto">
              <ChevronRight small />
            </span>
          </a>
        </li>
      ))}
    </ul>
  );
}

function Account() {
  return (
    <Phone label="Akun">
      <TitleBar>
        <Heading className="flex-1 text-center">Akun</Heading>
      </TitleBar>
      <div className="mt-[31px] ml-[20px] flex gap-[13px]">
        <Grey className="size-[48px] rounded-full" />
        <div className="flex flex-col gap-[4px]">
          <Grey className="h-[14px] w-[80px]" />
          <Grey className="h-[7px] w-[66px]" />
        </div>
      </div>
      <AccountRows count={4} className="mt-[13px]" />
      <div className="h-[3px] shrink-0 bg-gray-200" />
      <AccountRows count={2} className="mt-[21px] mb-[8px]" />
      <div className="h-[3px] shrink-0 bg-gray-200" />
      <BottomNav />
    </Phone>
  );
}

const SCREENS: ReactNode[] = [
  <Splash />,
  <Onboarding />,
  <FormSketch label="Masuk" fields={2} link="mt-[48px]" />,
  <FormSketch label="Daftar" fields={4} link="mt-[89px]" />,
  <CodeSketch label="Kode verifikasi" boxes />,
  <CodeSketch label="Kata sandi baru" boxes={false} />,
  <Home />,
  <AddVehicle />,
  <BookEmpty />,
  <PickPlace />,
  <PickPackage />,
  <BookFilled />,
  <Payment />,
  <PaymentMethods />,
  <Voucher />,
  <Success />,
  <Orders />,
  <Account />,
];

export default function App() {
  return (
    <main className="min-h-screen bg-linear-to-b from-white to-gray-100 px-[199px] pt-[216px] font-['Roboto',sans-serif]">
      <h1 className="ml-[477px] font-['Inter',sans-serif] text-[137px] leading-none font-semibold text-black">
        Wireframe Digital
      </h1>
      <div className="mt-[114px] grid grid-cols-9 items-start gap-x-[85px] gap-y-[103px]">
        {SCREENS.map((screen, i) => (
          <Fragment key={i}>{screen}</Fragment>
        ))}
      </div>
    </main>
  );
}
